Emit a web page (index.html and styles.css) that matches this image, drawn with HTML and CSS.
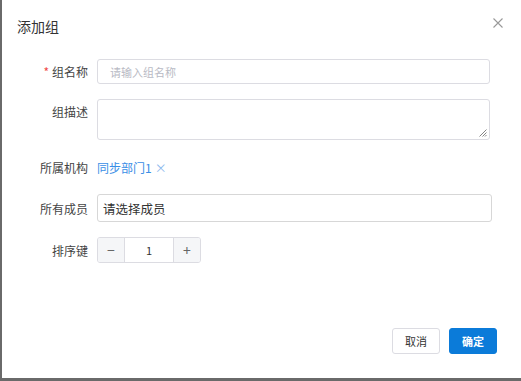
FILE: index.html
```html
<!DOCTYPE html>
<html lang="zh">
<head>
<meta charset="utf-8">
<link rel="stylesheet" href="styles.css">
</head>
<body>
<div class="dialog">
  <div class="header">
    <span class="title">添加组</span>
    <span class="close">
      <svg width="10" height="10" viewBox="0 0 10 10"><path d="M0.5 0.5L9.5 9.5M9.5 0.5L0.5 9.5" stroke="#999" stroke-width="1.1" fill="none"/></svg>
    </span>
  </div>
  <div class="form">
    <div class="row">
      <label class="label"><span class="req">*</span>组名称</label>
      <div class="input placeholder w1">请输入组名称</div>
    </div>
    <div class="row top">
      <label class="label lt">组描述</label>
      <div class="textarea w1">
        <svg class="grip" width="8" height="8" viewBox="0 0 8 8"><path d="M7.5 0.5L0.5 7.5M7.5 3.5L3.5 7.5M7.5 6L6 7.5" stroke="#777" stroke-width="0.9" fill="none"/></svg>
      </div>
    </div>
    <div class="row r3">
      <label class="label">所属机构</label>
      <span class="link">同步部门1<span class="x">×</span></span>
    </div>
    <div class="row">
      <label class="label">所有成员</label>
      <div class="input select w2">请选择成员</div>
    </div>
    <div class="row">
      <label class="label">排序键</label>
      <div class="number">
        <span class="nbtn">−</span>
        <span class="nval">1</span>
        <span class="nbtn plus">+</span>
      </div>
    </div>
  </div>
  <div class="footer">
    <button class="btn">取消</button>
    <button class="btn primary">确定</button>
  </div>
</div>
</body>
</html>
```
FILE: styles.css
```css
html, body {
  margin: 0;
  padding: 0;
}
body {
  width: 521px;
  height: 381px;
  background: #6a6a6a;
  font-family: "Noto Sans CJK SC", "Noto Sans", sans-serif;
  font-size: 12px;
  color: #333;
  overflow: hidden;
}
.dialog {
  margin-left: 2px;
  width: 519px;
  height: 378px;
  background: #fff;
  display: flex;
  flex-direction: column;
}
.header {
  height: 54px;
  display: flex;
  align-items: center;
  justify-content: space-between;
  padding: 0 18px 0 15px;
}
.title {
  font-size: 14px;
  color: #333;
  margin-top: -2px;
}
.close {
  display: flex;
  margin-top: -8px;
}
.form {
  padding-top: 5px;
  display: flex;
  flex-direction: column;
  gap: 15px;
}
.row {
  display: flex;
  align-items: center;
}
.row.top {
  align-items: flex-start;
}
.label {
  width: 86px;
  text-align: right;
  padding-right: 9px;
  color: #444;
  flex: none;
}
.lt {
  padding-top: 4px;
}
.req {
  color: #f04a4a;
  margin-right: 3px;
}
.input {
  box-sizing: border-box;
  height: 25px;
  border: 1px solid #dcdce2;
  border-radius: 3px;
  padding: 0 12px;
  display: flex;
  align-items: center;
}
.w1 { width: 393px; }
.w2 { width: 395px; height: 28px; padding-left: 5px; border-color: #d7d7d7; color: #333; font-size: 12.5px; }
.placeholder {
  color: #b8bac4;
  font-size: 11px;
}
.textarea {
  box-sizing: border-box;
  height: 41px;
  border: 1px solid #dcdce2;
  border-radius: 3px;
  position: relative;
}
.grip {
  position: absolute;
  right: 2px;
  bottom: 2px;
}
.r3 {
  height: 24px;
}
.link {
  color: #3a8ee6;
  font-size: 12px;
}
.x {
  color: #8bb8ee;
  margin-left: 3px;
}
.number {
  box-sizing: border-box;
  width: 104px;
  height: 26px;
  border: 1px solid #dcdce2;
  border-radius: 3px;
  display: flex;
  overflow: hidden;
}
.nbtn {
  width: 26px;
  background: #f5f6f8;
  display: flex;
  align-items: center;
  justify-content: center;
  color: #666;
  font-size: 14px;
}
.nbtn:first-child {
  border-right: 1px solid #dcdce2;
}
.nbtn.plus {
  border-left: 1px solid #dcdce2;
}
.nval {
  flex: 1;
  display: flex;
  align-items: center;
  justify-content: center;
  font-size: 11px;
}
.footer {
  margin-top: auto;
  margin-bottom: 24px;
  display: flex;
  justify-content: flex-end;
  gap: 9px;
  padding-right: 24px;
}
.btn {
  box-sizing: border-box;
  height: 26px;
  width: 48px;
  border: 1px solid #dcdce2;
  border-radius: 3px;
  background: #fff;
  font-family: inherit;
  font-size: 11px;
  color: #333;
  padding: 0;
}
.btn.primary {
  background: #0b7bd9;
  border-color: #0b7bd9;
  color: #fff;
  font-weight: bold;
}
```
